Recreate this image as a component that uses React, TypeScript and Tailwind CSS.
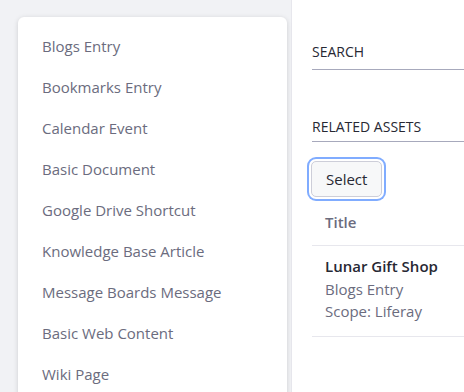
import React from 'react';

const types = [
  'Blogs Entry',
  'Bookmarks Entry',
  'Calendar Event',
  'Basic Document',
  'Google Drive Shortcut',
  'Knowledge Base Article',
  'Message Boards Message',
  'Basic Web Content',
  'Wiki Page',
];

function TypeMenu() {
  return (
    <div className="ml-[18px] mt-[17px] w-[269px] h-[400px] rounded-md bg-white pt-[9px] shadow-[0_1px_5px_rgba(0,0,0,0.15)]">
      {types.map((t) => (
        <div key={t} className="px-6 py-[9px] text-[15px] leading-[23px] text-[#6b6c7e]">
          {t}
        </div>
      ))}
    </div>
  );
}

function SectionTitle({ children, className }: { children: React.ReactNode; className: string }) {
  return (
    <div className={`${className} border-b border-[#a7a9bc] text-[14px] leading-5 text-[#272833]`}>
      {children}
    </div>
  );
}

export default function App() {
  return (
    <div
      className="flex h-[392px] w-[464px] overflow-hidden bg-white"
      style={{ fontFamily: '"Open Sans", "Noto Sans", sans-serif' }}
    >
      <div className="h-full w-[292px] shrink-0 border-r border-[#e7e7ed] bg-[#f1f2f5]">
        <TypeMenu />
      </div>
      <div className="min-w-0 flex-1 pl-5">
        <div className="w-[200px]">
          <SectionTitle className="mt-[42px] pb-[7px]">SEARCH</SectionTitle>
          <SectionTitle className="mt-[47px] pb-[4px]">RELATED ASSETS</SectionTitle>
          <button className="ml-[-1px] mt-[19px] h-[36px] rounded-[5px] border border-[#cdced9] bg-[#f7f8f9] px-[14px] text-[15px] font-medium text-[#272833] shadow-[0_0_0_2px_#fff,0_0_0_4px_#80acff]">
            Select
          </button>
          <div className="mt-[4px] border-b border-[#e7e7ed] pl-[13px] pt-[10px] pb-[12px] text-[15px] font-semibold leading-[22px] text-[#6b6c7e]">
            Title
          </div>
          <div className="border-b border-[#e7e7ed] pl-[13px] pt-[9px] pb-[13px] text-[15px] leading-[22.5px]">
            <div className="font-semibold text-[#272833]">Lunar Gift Shop</div>
            <div className="text-[#6b6c7e]">Blogs Entry</div>
            <div className="text-[#6b6c7e]">Scope: Liferay</div>
          </div>
        </div>
      </div>
    </div>
  );
}
